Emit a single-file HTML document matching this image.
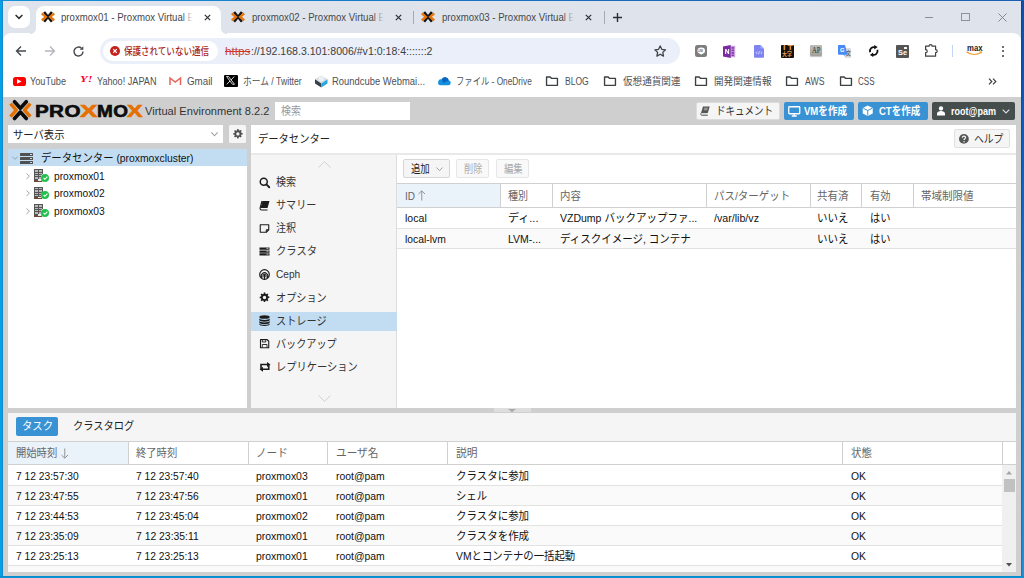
<!DOCTYPE html>
<html lang="ja">
<head>
<meta charset="utf-8">
<title>proxmox01 - Proxmox Virtual Environment</title>
<style>
*{box-sizing:border-box;margin:0;padding:0}
html,body{width:1024px;height:578px;overflow:hidden}
body{position:relative;background:#02a2e8;font-family:"Liberation Sans","Noto Sans CJK JP",sans-serif;color:#000}
body>*,#lastrow>*{position:absolute}
.t{display:block;white-space:nowrap;line-height:16px;height:16px;transform-origin:0 50%}
svg{overflow:visible}
</style>
</head>
<body>
<svg width="0" height="0" style="left:0;top:0"><defs>
<symbol id="pvx" viewBox="0 0 13 11.200"><path d="M2.900 1 10.100 10.200M10.100 1 2.900 10.200" fill="none" stroke="#161616" stroke-width="2.300"/><path d="M.7 2.300 4.500 5.600.7 8.900M12.300 2.300 8.500 5.600l3.800 3.300" fill="none" stroke="#e8750a" stroke-width="2.200"/></symbol>
<symbol id="cx" viewBox="0 0 10 10"><path d="M2 2l6 6M8 2l-6 6" stroke="#2b2d30" stroke-width="1.300" fill="none"/></symbol>
<symbol id="fold" viewBox="0 0 16 12"><path d="M1.700 1.200h4.200l1.400 1.500h7v8.100H1.700z" fill="none" stroke="#3c4043" stroke-width="1.600" stroke-linejoin="round"/></symbol>
</defs></svg>
<div style="left:2px;top:1px;width:1px;height:575px;background:#1789c9;"></div>
<div style="left:1021px;top:0px;width:3px;height:578px;background:linear-gradient(180deg,#0a4fb2,#0560c8 26%,#0a78d4 50%,#1a92de);"></div>
<div style="left:1021px;top:1px;width:1px;height:575px;background:rgba(0,40,110,.25);"></div>
<div style="left:0px;top:576px;width:1024px;height:2px;background:linear-gradient(180deg,#0b84c6,#0a9ade);"></div>
<div style="left:0px;top:0px;width:1024px;height:1px;background:linear-gradient(90deg,#1391d8,#1a6abc 60%,#1a5fb2);"></div>
<div style="left:3px;top:1px;width:1018px;height:45px;background:#dfe3eb;"></div>
<div style="left:3px;top:33px;width:1018px;height:35px;background:#fff;border-radius:8px 8px 0 0;"></div>
<div style="left:3px;top:67px;width:1018px;height:30px;background:#fff;"></div>
<div style="left:3px;top:97px;width:1018px;height:479px;background:#cfcfcf;"></div>
<div style="left:8px;top:6px;width:22px;height:22px;background:#fff;border-radius:7px;"></div>
<svg style="left:14px;top:13px;" width="10" height="8" viewBox="0 0 10 8"><path d="M1.600 2l3.400 3.400L8.400 2" fill="none" stroke="#2b2d30" stroke-width="1.500"/></svg>
<div style="left:36px;top:6px;width:185px;height:28px;background:#fff;border-radius:8px 8px 0 0;"></div>
<div style="left:30px;top:28px;width:6px;height:6px;background:radial-gradient(circle at 0 0,#dfe3eb 5.700px,#fff 6.300px);"></div>
<div style="left:221px;top:28px;width:6px;height:6px;background:radial-gradient(circle at 100% 0,#dfe3eb 5.700px,#fff 6.300px);"></div>
<svg style="left:41.3px;top:10.8px;" width="14" height="11.8" viewBox="0 0 13 11.200" preserveAspectRatio="none"><use href="#pvx"/></svg>
<span class="t" style="left:61px;top:10.30px;font-size:10px;color:#45494d;transform:scaleX(0.9624);">proxmox01 - Proxmox Virtual E</span>
<div style="left:182px;top:9px;width:12px;height:17px;background:linear-gradient(90deg,transparent,#fff 90%);"></div>
<svg style="left:203.0px;top:12.5px;" width="9" height="9" viewBox="0 0 10 10"><use href="#cx"/></svg>
<svg style="left:231.3px;top:10.8px;" width="14" height="11.8" viewBox="0 0 13 11.200" preserveAspectRatio="none"><use href="#pvx"/></svg>
<span class="t" style="left:251.5px;top:10.30px;font-size:10px;color:#45494d;transform:scaleX(0.9624);">proxmox02 - Proxmox Virtual E</span>
<div style="left:372.5px;top:9px;width:12px;height:17px;background:linear-gradient(90deg,transparent,#dfe3eb 90%);"></div>
<svg style="left:393.5px;top:12.5px;" width="9" height="9" viewBox="0 0 10 10"><use href="#cx"/></svg>
<svg style="left:421.3px;top:10.8px;" width="14" height="11.8" viewBox="0 0 13 11.200" preserveAspectRatio="none"><use href="#pvx"/></svg>
<span class="t" style="left:441.5px;top:10.30px;font-size:10px;color:#45494d;transform:scaleX(0.9624);">proxmox03 - Proxmox Virtual E</span>
<div style="left:562.5px;top:9px;width:12px;height:17px;background:linear-gradient(90deg,transparent,#dfe3eb 90%);"></div>
<svg style="left:584.0px;top:12.5px;" width="9" height="9" viewBox="0 0 10 10"><use href="#cx"/></svg>
<div style="left:413px;top:11px;width:1px;height:13px;background:#a4a9b2;"></div>
<div style="left:604px;top:11px;width:1px;height:13px;background:#a4a9b2;"></div>
<svg style="left:612px;top:11.5px;" width="11" height="11" viewBox="0 0 11 11"><path d="M5.500 1v9M1 5.500h9" stroke="#2b2d30" stroke-width="1.400"/></svg>
<div style="left:925px;top:16.8px;width:8px;height:1px;background:#8a8d93;"></div>
<div style="left:961px;top:12.5px;width:8.8px;height:8.8px;background:transparent;border:1px solid #8f9298;"></div>
<svg style="left:998px;top:12.5px;" width="9" height="9" viewBox="0 0 10 10"><path d="M.5.5l9 9M9.500.5l-9 9" stroke="#85888e" stroke-width="1.100" fill="none"/></svg>
<svg style="left:14.5px;top:45px;" width="12" height="12" viewBox="0 0 12 12"><path d="M11 6H1.800M6 1.500 1.500 6 6 10.500" fill="none" stroke="#45484c" stroke-width="1.400"/></svg>
<svg style="left:43.5px;top:45px;" width="12" height="12" viewBox="0 0 12 12"><path d="M1 6h9.200M6 1.500 10.500 6 6 10.500" fill="none" stroke="#b4b7bb" stroke-width="1.400"/></svg>
<svg style="left:72px;top:44.5px;" width="13" height="13" viewBox="0 0 13 13"><path d="M11 6.500a4.500 4.500 0 1 1-1.500-3.350" fill="none" stroke="#45484c" stroke-width="1.400"/><path d="M11.300 1.200v3.600H7.700z" fill="#45484c"/></svg>
<div style="left:100px;top:37.6px;width:580px;height:26.9px;background:#ebeff9;border-radius:13.400px;"></div>
<div style="left:103px;top:41.2px;width:114.8px;height:19.8px;background:#fff;border-radius:9.900px;"></div>
<svg style="left:109.5px;top:46px;" width="10" height="10" viewBox="0 0 10 10"><circle cx="5" cy="5" r="5" fill="#c5221f"/><path d="M3.200 3.200l3.600 3.600M6.800 3.200 3.200 6.800" stroke="#fff" stroke-width="1.200"/></svg>
<span class="t" style="left:124px;top:43.00px;font-size:10.5px;color:#a82a23;font-weight:500;transform:scaleX(0.8119);">保護されていない通信</span>
<span class="t" style="left:225px;top:43.00px;font-size:11.2px;color:#c0453d;transform:scaleX(1.0426);text-decoration:line-through;text-decoration-color:#d93025;">https</span>
<span class="t" style="left:250.5px;top:43.00px;font-size:11.2px;color:#3c4043;transform:scaleX(0.9442);">://192.168.3.101:8006/#v1:0:18:4:::::::2</span>
<svg style="left:653.4px;top:43.9px;" width="14.4" height="14.4" viewBox="0 0 24 24"><path d="M12 3.200l2.700 5.700 6.200.8-4.600 4.300 1.200 6.200L12 17.100l-5.500 3.100 1.200-6.200L3.100 9.700l6.200-.8z" fill="none" stroke="#3c4043" stroke-width="2.100" stroke-linejoin="round"/></svg>
<div style="left:694.5px;top:44.75px;width:12.5px;height:12.5px;background:#7d7d7d;border-radius:2.500px;"></div>
<svg style="left:696.5px;top:46.5px;" width="8.5" height="8.5" viewBox="0 0 17 17"><ellipse cx="8.500" cy="7.500" rx="7.600" ry="6.300" fill="#fff"/><path d="M6 12.500 8.300 16l2.300-3.200z" fill="#fff"/></svg>
<span class="t" style="left:698.3px;top:42.70px;font-size:3.5px;color:#666;font-weight:700;transform:scaleX(0.6137);">LINE</span>
<svg style="left:723px;top:44.5px;" width="13" height="13" viewBox="0 0 26 26"><path d="M15 1.500h8.500a1 1 0 0 1 1 1v21a1 1 0 0 1-1 1H15z" fill="#c9a3dc"/><path d="M17 4h5v3.500h-5zM17 9h5v3.500h-5zM17 14h5v3.500h-5zM17 19h5v3h-5z" fill="#8a3fb0"/><path d="M0 3.200 15.500 0v26L0 22.800z" fill="#7a2aa3"/><path d="M4.300 18V8h2.300l3.600 6.200V8h2.100v10h-2.200L6.400 11.600V18z" fill="#fff"/></svg>
<svg style="left:753.5px;top:44.75px;" width="10" height="12.75" viewBox="0 0 20 25.500"><path d="M2 0h11l7 7v16.500a2 2 0 0 1-2 2H2a2 2 0 0 1-2-2V2a2 2 0 0 1 2-2z" fill="#7d84f2"/><path d="M13 0l7 7h-5a2 2 0 0 1-2-2z" fill="#a9aef8"/><path d="M6.500 13 4 15.500 6.500 18M13.500 13l2.500 2.500-2.500 2.500M11 12.500l-2 6" fill="none" stroke="#fff" stroke-width="1.300"/></svg>
<div style="left:780.75px;top:44.75px;width:13px;height:12.75px;background:#111;border-radius:1px;"></div>
<span class="t" style="left:783.3px;top:40.30px;font-size:6.5px;color:#e8a14a;font-weight:700;transform:scaleX(1.3665);letter-spacing:1.500px;">IT</span>
<span class="t" style="left:782.3px;top:46.20px;font-size:5.5px;color:#e8a14a;font-weight:700;transform:scaleX(0.8987);">大学</span>
<div style="left:809.75px;top:44.75px;width:12.25px;height:11.5px;background:linear-gradient(180deg,#bdbdb5,#a2a29a);border-radius:1px;box-shadow:0 1px 1px rgba(0,0,0,.25);"></div>
<span class="t" style="left:811.6px;top:42.80px;font-size:8px;color:#2a2a2a;transform:scaleX(0.8246);font-family:'Liberation Serif',serif;">AP</span>
<div style="left:844.5px;top:47.5px;width:6.5px;height:10px;background:#d9dbdd;border-radius:1px;"></div>
<span class="t" style="left:845.8px;top:44.70px;font-size:5.5px;color:#5f6a72;font-weight:700;transform:scaleX(0.8703);">文</span>
<svg style="left:838px;top:44.75px;" width="9.5" height="12.5" viewBox="0 0 19 25"><path d="M1.500 0H14l5 19.500H12.500L16 25l-5.500-5.500H1.500A1.500 1.500 0 0 1 0 18V1.500A1.500 1.500 0 0 1 1.500 0z" fill="#4a8af4"/></svg>
<span class="t" style="left:840.3px;top:42.40px;font-size:6px;color:#fff;font-weight:700;transform:scaleX(0.9632);">G</span>
<svg style="left:868px;top:45px;" width="11.5" height="12" viewBox="0 0 23 24"><path d="M4.200 14.500A8 8 0 0 1 14.500 4.600" fill="none" stroke="#111" stroke-width="3.600"/><path d="M18.800 9.500A8 8 0 0 1 8.500 19.400" fill="none" stroke="#111" stroke-width="3.600"/><path d="M12.300 0l7 4.200-6.600 4.600z" fill="#111"/><path d="M10.700 24l-7-4.200 6.600-4.600z" fill="#111"/></svg>
<div style="left:896px;top:44.75px;width:12.75px;height:12.75px;background:#555;border-radius:1px;"></div>
<div style="left:903.5px;top:46.8px;width:3.8px;height:1.9px;background:#fff;border-radius:.5px;"></div>
<span class="t" style="left:897.6px;top:45.20px;font-size:7.2px;color:#fff;font-weight:700;transform:scaleX(1.0231);">Se</span>
<svg style="left:925.4px;top:44px;" width="13.2" height="12.8" viewBox="0 0 26.400 25.600"><path d="M1.200 4.400H8.200C8.200 .2 14.200 .2 14.200 4.400H21.200V11.400C25.600 11.400 25.600 17.400 21.200 17.400V24.400H1.200V17.400C5.600 17.400 5.600 11.400 1.200 11.400Z" fill="none" stroke="#3c4043" stroke-width="2.400" stroke-linejoin="round"/></svg>
<div style="left:952.3px;top:44.75px;width:1px;height:12.5px;background:#c4d4f5;"></div>
<span class="t" style="left:966.8px;top:40.20px;font-size:8.3px;color:#222;font-weight:700;transform:scaleX(0.9332);">max</span>
<svg style="left:966.4px;top:50.6px;" width="16.4" height="5" viewBox="0 0 32.800 10"><path d="M1 1.500C9 8.500 22 8.500 30.500 2.500" fill="none" stroke="#f29a2e" stroke-width="2.200"/><path d="M26.500.5l5.500.5-1.200 5z" fill="#f29a2e"/></svg>
<div style="left:1001.8px;top:45.5px;width:2.2px;height:2.2px;background:#3c4043;border-radius:50%;"></div>
<div style="left:1001.8px;top:50.0px;width:2.2px;height:2.2px;background:#3c4043;border-radius:50%;"></div>
<div style="left:1001.8px;top:54.5px;width:2.2px;height:2.2px;background:#3c4043;border-radius:50%;"></div>
<div style="left:13px;top:76.5px;width:12.5px;height:9px;background:#f00;border-radius:2.600px;"></div>
<svg style="left:17.4px;top:78.6px;" width="4.6" height="4.8" viewBox="0 0 4.600 4.800"><path d="M0 0l4.600 2.400L0 4.800z" fill="#fff"/></svg>
<span class="t" style="left:30px;top:74.00px;font-size:10px;color:#4d5156;transform:scaleX(0.9161);">YouTube</span>
<span class="t" style="left:79.5px;top:72.40px;font-size:8.4px;color:#ff0033;font-weight:700;transform:scaleX(1.4925);font-family:'Liberation Serif',serif;font-style:italic;">Y!</span>
<span class="t" style="left:97px;top:74.00px;font-size:10px;color:#4d5156;transform:scaleX(0.9121);">Yahoo! JAPAN</span>
<svg style="left:169px;top:75.7px;" width="12.5" height="9.5" viewBox="0 0 25 19"><path d="M2 18V4l10.500 8L23 4v14" fill="none" stroke="#e5665b" stroke-width="3" stroke-linejoin="miter"/></svg>
<span class="t" style="left:187px;top:74.00px;font-size:10px;color:#4d5156;transform:scaleX(0.9761);">Gmail</span>
<div style="left:224.25px;top:74.5px;width:13.25px;height:12.5px;background:#000;border-radius:1px;"></div>
<svg style="left:226.4px;top:76.4px;" width="9" height="8.8" viewBox="0 0 18 17.600"><path d="M1 1h4l12 15.600h-4z" fill="none" stroke="#fff" stroke-width="1.600"/><path d="M16.500 1 10 8.200M8 10 1.500 16.600" stroke="#fff" stroke-width="1.600"/></svg>
<span class="t" style="left:242.5px;top:74.00px;font-size:10px;color:#4d5156;transform:scaleX(0.8706);">ホーム / Twitter</span>
<svg style="left:313.5px;top:74.5px;" width="14.5" height="13" viewBox="0 0 29 26"><path d="M14.500 1 27 8.500 14.500 17 2 8.500z" fill="#d9dee3"/><path d="M2 8.500 14.500 17v8L2 17z" fill="#37414b"/><path d="M27 8.500 14.500 17v8L27 17z" fill="#2aa7e0"/><circle cx="14.500" cy="7.500" r="5.200" fill="#eef1f4"/></svg>
<span class="t" style="left:332px;top:74.00px;font-size:10px;color:#4d5156;transform:scaleX(0.9416);">Roundcube Webmai...</span>
<svg style="left:437px;top:76px;" width="14" height="9.5" viewBox="0 0 28 19"><path d="M7 18.500h15.500a5 5 0 0 0 1-9.900 7.500 7.500 0 0 0-14-2A6 6 0 0 0 7 18.500z" fill="#1490df"/><path d="M9.500 6.600a7.500 7.500 0 0 1 14 2L13 14z" fill="#0a64c0"/></svg>
<span class="t" style="left:455.5px;top:74.00px;font-size:10px;color:#4d5156;transform:scaleX(0.8313);">ファイル - OneDrive</span>
<svg style="left:545px;top:75.8px;" width="14" height="10.4" viewBox="0 0 16 12"><use href="#fold"/></svg>
<span class="t" style="left:565px;top:74.00px;font-size:10px;color:#4d5156;transform:scaleX(0.8544);">BLOG</span>
<svg style="left:603px;top:75.8px;" width="14" height="10.4" viewBox="0 0 16 12"><use href="#fold"/></svg>
<span class="t" style="left:622.5px;top:74.00px;font-size:10px;color:#4d5156;transform:scaleX(0.9583);">仮想通貨関連</span>
<svg style="left:693.5px;top:75.8px;" width="14" height="10.4" viewBox="0 0 16 12"><use href="#fold"/></svg>
<span class="t" style="left:713.75px;top:74.00px;font-size:10px;color:#4d5156;transform:scaleX(0.9583);">開発関連情報</span>
<svg style="left:785px;top:75.8px;" width="14" height="10.4" viewBox="0 0 16 12"><use href="#fold"/></svg>
<span class="t" style="left:805px;top:74.00px;font-size:10px;color:#4d5156;transform:scaleX(0.8697);">AWS</span>
<svg style="left:838.5px;top:75.8px;" width="14" height="10.4" viewBox="0 0 16 12"><use href="#fold"/></svg>
<span class="t" style="left:858px;top:74.00px;font-size:10px;color:#4d5156;transform:scaleX(0.8024);">CSS</span>
<svg style="left:987.5px;top:78px;" width="9" height="7" viewBox="0 0 9 7"><path d="M1 .7 3.800 3.500 1 6.300M5 .7 7.800 3.500 5 6.300" fill="none" stroke="#3c4043" stroke-width="1.200"/></svg>
<svg style="left:8.6px;top:100.25px;" width="22.8" height="20.25" viewBox="0 0 45.600 40.500"><path d="M11 3.500 22.800 16.500 34.600 3.500M11 37 22.800 24 34.600 37" fill="none" stroke="#0c0c0c" stroke-width="7.400" stroke-linecap="round" stroke-linejoin="round"/><path d="M3 7.300 14.600 20.250 3 33.200M42.600 7.300 31 20.250 42.600 33.200" fill="none" stroke="#e57000" stroke-width="7" stroke-linejoin="round"/></svg>
<span class="t" style="left:35.2px;top:104.20px;font-size:16.8px;color:#0c0c0c;font-weight:700;transform:scaleX(1.2289);letter-spacing:.3px;-webkit-text-stroke:.6px #0c0c0c;">PRO</span>
<span class="t" style="left:79.7px;top:104.20px;font-size:16.8px;color:#e57000;font-weight:700;transform:scaleX(1.5531);-webkit-text-stroke:.6px #e57000;">X</span>
<span class="t" style="left:96.9px;top:104.20px;font-size:16.8px;color:#0c0c0c;font-weight:700;transform:scaleX(1.1314);letter-spacing:.3px;-webkit-text-stroke:.6px #0c0c0c;">MO</span>
<span class="t" style="left:127.1px;top:104.20px;font-size:16.8px;color:#e57000;font-weight:700;transform:scaleX(1.3925);-webkit-text-stroke:.6px #e57000;">X</span>
<span class="t" style="left:145.3px;top:103.20px;font-size:11.6px;color:#333;transform:scaleX(0.9575);">Virtual Environment 8.2.2</span>
<div style="left:275px;top:102px;width:135px;height:17.5px;background:#fff;"></div>
<span class="t" style="left:280.5px;top:102.80px;font-size:11.5px;color:#9a9a9a;transform:scaleX(0.8696);">検索</span>
<div style="left:695.5px;top:101.75px;width:84px;height:18.5px;background:#f5f5f5;border:1px solid #dcdcdc;border-radius:2px;"></div>
<svg style="left:699.8px;top:106px;" width="10.4" height="10" viewBox="0 0 20.800 20"><path d="M6 1h13.500L15.500 14H2z" fill="#555"/><path d="M8.500 4.500h7M7.600 7.500h7" stroke="#f5f5f5" stroke-width="1.100"/><path d="M2.800 13.500C1 14.500 1 18 3.500 18.500h12" fill="none" stroke="#555" stroke-width="2"/><path d="M3 16h12.500" stroke="#999" stroke-width="1"/></svg>
<span class="t" style="left:716px;top:102.80px;font-size:11.5px;color:#333;transform:scaleX(0.8261);">ドキュメント</span>
<div style="left:783.75px;top:101.75px;width:70.5px;height:18.5px;background:#3892d4;border-radius:2px;"></div>
<svg style="left:787.5px;top:105.8px;" width="12.5" height="10.5" viewBox="0 0 25 21"><rect x="1.500" y="1.500" width="22" height="14" rx="1.500" fill="none" stroke="#fff" stroke-width="2.600"/><path d="M7.500 20h10M12.500 16v4" stroke="#fff" stroke-width="2.600"/></svg>
<span class="t" style="left:804px;top:102.80px;font-size:11.5px;color:#fff;font-weight:700;transform:scaleX(0.8309);">VMを作成</span>
<div style="left:858.25px;top:101.75px;width:69.25px;height:18.5px;background:#3892d4;border-radius:2px;"></div>
<svg style="left:861.75px;top:105.3px;" width="11.5" height="11.5" viewBox="0 0 23 23"><path d="M11.500 1 21.500 6v11L11.500 22 1.500 17V6z" fill="#fff"/><path d="M2.500 6.500 11.500 11l9-4.500M11.500 11v10" fill="none" stroke="#3892d4" stroke-width="2"/></svg>
<span class="t" style="left:878.75px;top:102.80px;font-size:11.5px;color:#fff;font-weight:700;transform:scaleX(0.8276);">CTを作成</span>
<div style="left:932px;top:101.75px;width:83.2px;height:18.5px;background:#464d4d;border-radius:2px;"></div>
<svg style="left:937px;top:106px;" width="8" height="9.5" viewBox="0 0 16 19"><circle cx="8" cy="5" r="4.300" fill="#fff"/><path d="M0 19v-3.500C0 11.500 3.500 10 8 10s8 1.500 8 5.500V19z" fill="#fff"/></svg>
<span class="t" style="left:951px;top:102.80px;font-size:11.5px;color:#fff;font-weight:700;transform:scaleX(0.7865);">root@pam</span>
<svg style="left:1001.5px;top:109px;" width="8" height="5" viewBox="0 0 8 5"><path d="M.7.700 4 4 7.300.7" fill="none" stroke="#dfe3e3" stroke-width="1.100"/></svg>
<div style="left:8px;top:125.3px;width:215.2px;height:17.7px;background:#fff;"></div>
<span class="t" style="left:13px;top:126.60px;font-size:11.5px;color:#222;transform:scaleX(0.8974);">サーバ表示</span>
<svg style="left:211px;top:131.8px;" width="7" height="4.4" viewBox="0 0 7 4.400"><path d="M.4.400 3.500 3.800 6.600.4" fill="none" stroke="#9f9f9f" stroke-width="1.100"/></svg>
<div style="left:228.7px;top:125.3px;width:17.55px;height:17.7px;background:#f5f5f5;border-radius:1.500px;"></div>
<svg style="left:232.7px;top:129.3px;" width="9.8" height="9.8" viewBox="0 0 20 20"><path d="M8.600 0h2.800l.5 2.600 1.700.7 2.200-1.500 2 2-1.500 2.200.7 1.700 2.600.5v2.800l-2.600.5-.7 1.700 1.500 2.200-2 2-2.200-1.500-1.700.7-.5 2.600H8.600l-.5-2.600-1.700-.7-2.200 1.500-2-2 1.500-2.200-.7-1.700L.4 11.400V8.600L3 8.100l.7-1.700-1.500-2.200 2-2 2.200 1.500 1.700-.7z" fill="#505050"/><circle cx="10" cy="10" r="3.300" fill="#f5f5f5"/></svg>
<div style="left:8px;top:149px;width:238.5px;height:259px;background:#fff;"></div>
<div style="left:8px;top:149px;width:238.5px;height:17px;background:#c2ddf2;"></div>
<svg style="left:12px;top:156px;" width="6" height="4" viewBox="0 0 6 4"><path d="M.4.500 3 3.400 5.600.5" fill="none" stroke="#93a3b0" stroke-width=".9"/></svg>
<div style="left:20.2px;top:152.5px;width:13.3px;height:3.3px;background:#505050;border-radius:.5px;"></div>
<div style="left:29.5px;top:153.6px;width:2.6px;height:1.1px;background:#c2ddf2;"></div>
<div style="left:20.2px;top:156.7px;width:13.3px;height:3.3px;background:#505050;border-radius:.5px;"></div>
<div style="left:29.5px;top:157.79999999999998px;width:2.6px;height:1.1px;background:#c2ddf2;"></div>
<div style="left:20.2px;top:160.9px;width:13.3px;height:3.3px;background:#505050;border-radius:.5px;"></div>
<div style="left:29.5px;top:162.0px;width:2.6px;height:1.1px;background:#c2ddf2;"></div>
<span class="t" style="left:41.25px;top:149.80px;font-size:11.5px;color:#111;transform:scaleX(0.9006);">データセンター (proxmoxcluster)</span>
<svg style="left:26.3px;top:172.75px;" width="4" height="6.4" viewBox="0 0 4 6.400"><path d="M.5.500 3.400 3.200 .5 5.900" fill="none" stroke="#9c9c9c" stroke-width=".9"/></svg>
<div style="left:34px;top:169.25px;width:9.4px;height:12.7px;background:#555;"></div>
<div style="left:35.2px;top:170.45px;width:2.4px;height:1.3px;background:#b9b9b9;"></div>
<div style="left:38.6px;top:170.45px;width:3.5px;height:1.3px;background:#b9b9b9;"></div>
<div style="left:35.2px;top:172.75px;width:2.4px;height:1.3px;background:#b9b9b9;"></div>
<div style="left:38.6px;top:172.75px;width:3.5px;height:1.3px;background:#b9b9b9;"></div>
<div style="left:35.2px;top:175.04999999999998px;width:2.4px;height:1.3px;background:#b9b9b9;"></div>
<div style="left:38.6px;top:175.04999999999998px;width:3.5px;height:1.3px;background:#b9b9b9;"></div>
<div style="left:35.2px;top:177.35px;width:2.4px;height:1.3px;background:#b9b9b9;"></div>
<div style="left:38.6px;top:177.35px;width:3.5px;height:1.3px;background:#b9b9b9;"></div>
<div style="left:34px;top:179.95px;width:9.4px;height:2px;background:#6b4a3a;"></div>
<div style="left:38.3px;top:179.35px;width:2.6px;height:1.6px;background:#eee;"></div>
<div style="left:40.6px;top:173.15px;width:9.4px;height:9.4px;background:#fff;border-radius:50%;"></div>
<div style="left:41.2px;top:173.75px;width:8.2px;height:8.2px;background:#21bf4b;border-radius:50%;"></div>
<svg style="left:42.9px;top:175.95px;" width="5" height="4" viewBox="0 0 5 4"><path d="M.6 2 1.900 3.300 4.400.6" fill="none" stroke="#fff" stroke-width="1.100"/></svg>
<span class="t" style="left:53.75px;top:167.75px;font-size:11.5px;color:#111;transform:scaleX(0.8921);">proxmox01</span>
<svg style="left:26.3px;top:190.25px;" width="4" height="6.4" viewBox="0 0 4 6.400"><path d="M.5.500 3.400 3.200 .5 5.900" fill="none" stroke="#9c9c9c" stroke-width=".9"/></svg>
<div style="left:34px;top:186.75px;width:9.4px;height:12.7px;background:#555;"></div>
<div style="left:35.2px;top:187.95px;width:2.4px;height:1.3px;background:#b9b9b9;"></div>
<div style="left:38.6px;top:187.95px;width:3.5px;height:1.3px;background:#b9b9b9;"></div>
<div style="left:35.2px;top:190.25px;width:2.4px;height:1.3px;background:#b9b9b9;"></div>
<div style="left:38.6px;top:190.25px;width:3.5px;height:1.3px;background:#b9b9b9;"></div>
<div style="left:35.2px;top:192.54999999999998px;width:2.4px;height:1.3px;background:#b9b9b9;"></div>
<div style="left:38.6px;top:192.54999999999998px;width:3.5px;height:1.3px;background:#b9b9b9;"></div>
<div style="left:35.2px;top:194.85px;width:2.4px;height:1.3px;background:#b9b9b9;"></div>
<div style="left:38.6px;top:194.85px;width:3.5px;height:1.3px;background:#b9b9b9;"></div>
<div style="left:34px;top:197.45px;width:9.4px;height:2px;background:#6b4a3a;"></div>
<div style="left:38.3px;top:196.85px;width:2.6px;height:1.6px;background:#eee;"></div>
<div style="left:40.6px;top:190.65px;width:9.4px;height:9.4px;background:#fff;border-radius:50%;"></div>
<div style="left:41.2px;top:191.25px;width:8.2px;height:8.2px;background:#21bf4b;border-radius:50%;"></div>
<svg style="left:42.9px;top:193.45px;" width="5" height="4" viewBox="0 0 5 4"><path d="M.6 2 1.900 3.300 4.400.6" fill="none" stroke="#fff" stroke-width="1.100"/></svg>
<span class="t" style="left:53.75px;top:185.25px;font-size:11.5px;color:#111;transform:scaleX(0.8921);">proxmox02</span>
<svg style="left:26.3px;top:207.75px;" width="4" height="6.4" viewBox="0 0 4 6.400"><path d="M.5.500 3.400 3.200 .5 5.900" fill="none" stroke="#9c9c9c" stroke-width=".9"/></svg>
<div style="left:34px;top:204.25px;width:9.4px;height:12.7px;background:#555;"></div>
<div style="left:35.2px;top:205.45px;width:2.4px;height:1.3px;background:#b9b9b9;"></div>
<div style="left:38.6px;top:205.45px;width:3.5px;height:1.3px;background:#b9b9b9;"></div>
<div style="left:35.2px;top:207.75px;width:2.4px;height:1.3px;background:#b9b9b9;"></div>
<div style="left:38.6px;top:207.75px;width:3.5px;height:1.3px;background:#b9b9b9;"></div>
<div style="left:35.2px;top:210.04999999999998px;width:2.4px;height:1.3px;background:#b9b9b9;"></div>
<div style="left:38.6px;top:210.04999999999998px;width:3.5px;height:1.3px;background:#b9b9b9;"></div>
<div style="left:35.2px;top:212.35px;width:2.4px;height:1.3px;background:#b9b9b9;"></div>
<div style="left:38.6px;top:212.35px;width:3.5px;height:1.3px;background:#b9b9b9;"></div>
<div style="left:34px;top:214.95px;width:9.4px;height:2px;background:#6b4a3a;"></div>
<div style="left:38.3px;top:214.35px;width:2.6px;height:1.6px;background:#eee;"></div>
<div style="left:40.6px;top:208.15px;width:9.4px;height:9.4px;background:#fff;border-radius:50%;"></div>
<div style="left:41.2px;top:208.75px;width:8.2px;height:8.2px;background:#21bf4b;border-radius:50%;"></div>
<svg style="left:42.9px;top:210.95px;" width="5" height="4" viewBox="0 0 5 4"><path d="M.6 2 1.900 3.300 4.400.6" fill="none" stroke="#fff" stroke-width="1.100"/></svg>
<span class="t" style="left:53.75px;top:202.75px;font-size:11.5px;color:#111;transform:scaleX(0.8921);">proxmox03</span>
<div style="left:251px;top:125px;width:765.3px;height:283px;background:#fff;"></div>
<span class="t" style="left:258px;top:130.80px;font-size:11.5px;color:#222;transform:scaleX(0.8944);">データセンター</span>
<div style="left:954.4px;top:129.2px;width:55.6px;height:19.2px;background:#f5f5f5;border:1px solid #e0e0e0;border-radius:2px;"></div>
<svg style="left:959px;top:133.9px;" width="9.8" height="9.8" viewBox="0 0 16 16"><circle cx="8" cy="8" r="8" fill="#555"/><path d="M5.500 6.200c0-3.400 5.200-3.300 5.200-.3 0 1.900-2.500 2-2.500 4" fill="none" stroke="#f5f5f5" stroke-width="2"/><circle cx="8.200" cy="12.600" r="1.200" fill="#f5f5f5"/></svg>
<span class="t" style="left:973.6px;top:130.80px;font-size:11.5px;color:#333;transform:scaleX(0.8522);">ヘルプ</span>
<div style="left:251px;top:153px;width:765.3px;height:2px;background:#e9e9e9;"></div>
<div style="left:251px;top:155px;width:145.5px;height:253px;background:#f5f5f5;"></div>
<div style="left:396px;top:155px;width:1px;height:253px;background:#dcdcdc;"></div>
<svg style="left:317.5px;top:160.5px;" width="13" height="7" viewBox="0 0 13 7"><path d="M.5 6.500 6.500.7l6 5.800" fill="none" stroke="#d0d0d0" stroke-width="1"/></svg>
<svg style="left:317.5px;top:395px;" width="13" height="7" viewBox="0 0 13 7"><path d="M.5.500 6.500 6.300l6-5.800" fill="none" stroke="#d0d0d0" stroke-width="1"/></svg>
<div style="left:251px;top:311.7px;width:145.5px;height:19.2px;background:#c2ddf2;"></div>
<svg style="left:258.5px;top:176.7px;" width="11" height="11" viewBox="0 0 22 22"><circle cx="9.500" cy="9.500" r="7" fill="none" stroke="#1c1c1c" stroke-width="3"/><path d="M14.800 14.800 20.500 20.500" stroke="#1c1c1c" stroke-width="3.600" stroke-linecap="round"/></svg>
<span class="t" style="left:276.3px;top:174.20px;font-size:11.5px;color:#333;transform:scaleX(0.8739);">検索</span>
<svg style="left:258.5px;top:199.76999999999998px;" width="11" height="11" viewBox="0 0 22 22"><path d="M7 2h14l-4 14H3z" fill="#1c1c1c"/><path d="M6 2 2 16.500c0 3 1.500 3.500 3 3.500h12" fill="none" stroke="#1c1c1c" stroke-width="2.200"/></svg>
<span class="t" style="left:276.3px;top:197.27px;font-size:11.5px;color:#333;transform:scaleX(0.8783);">サマリー</span>
<svg style="left:258.5px;top:222.83999999999997px;" width="11" height="11" viewBox="0 0 22 22"><path d="M2.500 3.500h17v10l-5 5h-12z" fill="none" stroke="#1c1c1c" stroke-width="2.200" stroke-linejoin="round"/><path d="M19.500 13.500h-5v5" fill="none" stroke="#1c1c1c" stroke-width="2"/></svg>
<span class="t" style="left:276.3px;top:220.34px;font-size:11.5px;color:#333;transform:scaleX(0.8739);">注釈</span>
<svg style="left:258.5px;top:245.91px;" width="11" height="11" viewBox="0 0 22 22"><path d="M1 3h20v4.600H1zM1 8.800h20v4.600H1zM1 14.600h20v4.600H1z" fill="#1c1c1c"/><path d="M15 4.600h4M15 10.400h4M15 16.200h4" stroke="#f5f5f5" stroke-width="1.600"/></svg>
<span class="t" style="left:276.3px;top:243.41px;font-size:11.5px;color:#333;transform:scaleX(0.8977);">クラスタ</span>
<svg style="left:258.5px;top:268.98px;" width="11" height="11" viewBox="0 0 22 22"><circle cx="11" cy="11" r="9.600" fill="none" stroke="#1c1c1c" stroke-width="2.400"/><path d="M6.200 18.200a6.400 6.400 0 1 1 9.600 0M9 16.200a3.200 3.200 0 1 1 4 0" fill="none" stroke="#1c1c1c" stroke-width="2.200"/><path d="M11 11.500v10" stroke="#1c1c1c" stroke-width="2.200"/></svg>
<span class="t" style="left:276.3px;top:266.48px;font-size:11.5px;color:#333;transform:scaleX(0.8800);">Ceph</span>
<svg style="left:258.5px;top:292.04999999999995px;" width="11" height="11" viewBox="0 0 22 22"><g transform="translate(1 1)"><path d="M8.600 0h2.800l.5 2.600 1.700.7 2.200-1.500 2 2-1.500 2.200.7 1.700 2.600.5v2.800l-2.600.5-.7 1.700 1.500 2.200-2 2-2.200-1.500-1.700.7-.5 2.600H8.600l-.5-2.600-1.700-.7-2.200 1.500-2-2 1.500-2.200-.7-1.700L.4 11.400V8.600L3 8.100l.7-1.700-1.500-2.200 2-2 2.200 1.500 1.700-.7z" fill="#1c1c1c"/><circle cx="10" cy="10" r="3.300" fill="#f5f5f5"/></g></svg>
<span class="t" style="left:276.3px;top:289.55px;font-size:11.5px;color:#333;transform:scaleX(0.8817);">オプション</span>
<svg style="left:258.5px;top:315.12px;" width="11" height="11" viewBox="0 0 22 22"><ellipse cx="11" cy="4" rx="10.400" ry="3.700" fill="#1c1c1c"/><path d="M.6 6.400c0 4.600 20.800 4.600 20.800 0v3.600c0 4.600-20.800 4.600-20.800 0zM.6 11.400c0 4.600 20.800 4.600 20.800 0v3.600c0 4.600-20.800 4.600-20.800 0zM.6 16.400c0 4.600 20.800 4.600 20.800 0v2.200c0 4.600-20.800 4.600-20.800 0z" fill="#1c1c1c"/></svg>
<span class="t" style="left:276.3px;top:312.62px;font-size:11.5px;color:#333;transform:scaleX(0.8851);">ストレージ</span>
<svg style="left:258.5px;top:338.19px;" width="11" height="11" viewBox="0 0 22 22"><path d="M3 3h13l3.500 3.500V19.500H3z" fill="none" stroke="#1c1c1c" stroke-width="2.200" stroke-linejoin="round"/><path d="M6.500 3.500h7v4.500h-7zM6.500 19v-6h9.500v6" fill="none" stroke="#1c1c1c" stroke-width="1.800"/></svg>
<span class="t" style="left:276.3px;top:335.69px;font-size:11.5px;color:#333;transform:scaleX(0.8797);">バックアップ</span>
<svg style="left:258.5px;top:361.26px;" width="11" height="11" viewBox="0 0 22 22"><path d="M4 15.500V7h13M19.500 8v8.500h-13" fill="none" stroke="#1c1c1c" stroke-width="3.200"/><path d="M16 2 23 7l-7 5zM8 11.500 1 16.500l7 5z" fill="#1c1c1c"/></svg>
<span class="t" style="left:276.3px;top:358.76px;font-size:11.5px;color:#333;transform:scaleX(0.8902);">レプリケーション</span>
<div style="left:403px;top:159px;width:46.75px;height:18.5px;background:#f5f5f5;border:1px solid #d6d6d6;border-radius:2px;"></div>
<span class="t" style="left:410.5px;top:160.60px;font-size:11.5px;color:#222;transform:scaleX(0.8152);">追加</span>
<svg style="left:435.5px;top:166.5px;" width="7" height="4.5" viewBox="0 0 7 4.500"><path d="M.5.500 3.500 3.700 6.500.5" fill="none" stroke="#9a9a9a" stroke-width=".9"/></svg>
<div style="left:456px;top:159px;width:33px;height:18.5px;background:#f9f9f9;border:1px solid #e6e6e6;border-radius:2px;"></div>
<span class="t" style="left:464px;top:160.60px;font-size:11.5px;color:#a9a9a9;transform:scaleX(0.7935);">削除</span>
<div style="left:496px;top:159px;width:33px;height:18.5px;background:#f9f9f9;border:1px solid #e6e6e6;border-radius:2px;"></div>
<span class="t" style="left:503.5px;top:160.60px;font-size:11.5px;color:#a9a9a9;transform:scaleX(0.8152);">編集</span>
<div style="left:397px;top:183px;width:619.3px;height:1px;background:#d0d0d0;"></div>
<div style="left:397px;top:184px;width:103px;height:23.5px;background:#eaf2fa;"></div>
<div style="left:397px;top:207px;width:619.3px;height:1px;background:#d0d0d0;"></div>
<div style="left:500px;top:184px;width:1px;height:23.5px;background:#d0d0d0;"></div>
<div style="left:551.5px;top:184px;width:1px;height:23.5px;background:#d0d0d0;"></div>
<div style="left:706.4px;top:184px;width:1px;height:23.5px;background:#d0d0d0;"></div>
<div style="left:809.5px;top:184px;width:1px;height:23.5px;background:#d0d0d0;"></div>
<div style="left:861.2px;top:184px;width:1px;height:23.5px;background:#d0d0d0;"></div>
<div style="left:913px;top:184px;width:1px;height:23.5px;background:#d0d0d0;"></div>
<span class="t" style="left:404.75px;top:187.60px;font-size:11.5px;color:#666;transform:scaleX(0.8696);">ID</span>
<svg style="left:418px;top:190px;" width="7.5" height="11" viewBox="0 0 7.500 11"><path d="M3.750 10.500V1M.5 4 3.750.8 7 4" fill="none" stroke="#8a8a8a" stroke-width=".9"/></svg>
<span class="t" style="left:508px;top:187.60px;font-size:11.5px;color:#666;transform:scaleX(0.8696);">種別</span>
<span class="t" style="left:559.75px;top:187.60px;font-size:11.5px;color:#666;transform:scaleX(0.9022);">内容</span>
<span class="t" style="left:713.9px;top:187.60px;font-size:11.5px;color:#666;transform:scaleX(0.9092);">パス/ターゲット</span>
<span class="t" style="left:817.4px;top:187.60px;font-size:11.5px;color:#666;transform:scaleX(0.9101);">共有済</span>
<span class="t" style="left:869.5px;top:187.60px;font-size:11.5px;color:#666;transform:scaleX(0.8913);">有効</span>
<span class="t" style="left:921.2px;top:187.60px;font-size:11.5px;color:#666;transform:scaleX(0.9130);">帯域制限値</span>
<div style="left:397px;top:228px;width:619.3px;height:20px;background:#fafafa;"></div>
<div style="left:397px;top:228px;width:619.3px;height:1px;background:#e2e2e2;"></div>
<div style="left:397px;top:248px;width:619.3px;height:1px;background:#e2e2e2;"></div>
<span class="t" style="left:404.75px;top:210.00px;font-size:11.5px;color:#111;transform:scaleX(0.9194);">local</span>
<span class="t" style="left:508px;top:210.00px;font-size:11.5px;color:#111;transform:scaleX(0.9597);">ディ...</span>
<span class="t" style="left:559.75px;top:210.00px;font-size:11.5px;color:#111;transform:scaleX(0.9140);">VZDump バックアップファ...</span>
<span class="t" style="left:713.9px;top:210.00px;font-size:11.5px;color:#111;transform:scaleX(0.9263);">/var/lib/vz</span>
<span class="t" style="left:817.4px;top:210.00px;font-size:11.5px;color:#111;transform:scaleX(0.9101);">いいえ</span>
<span class="t" style="left:869.5px;top:210.00px;font-size:11.5px;color:#111;transform:scaleX(0.8913);">はい</span>
<span class="t" style="left:404.75px;top:230.70px;font-size:11.5px;color:#111;transform:scaleX(0.8981);">local-lvm</span>
<span class="t" style="left:508px;top:230.70px;font-size:11.5px;color:#111;transform:scaleX(0.9111);">LVM-...</span>
<span class="t" style="left:559.75px;top:230.70px;font-size:11.5px;color:#111;transform:scaleX(0.9127);">ディスクイメージ, コンテナ</span>
<span class="t" style="left:817.4px;top:230.70px;font-size:11.5px;color:#111;transform:scaleX(0.9101);">いいえ</span>
<span class="t" style="left:869.5px;top:230.70px;font-size:11.5px;color:#111;transform:scaleX(0.8913);">はい</span>
<div style="left:493.5px;top:408.3px;width:37px;height:4px;background:#dedede;"></div>
<svg style="left:508.2px;top:409px;" width="8" height="3.2" viewBox="0 0 8 3.200"><path d="M0 0h8L4 3.200z" fill="#ababab"/></svg>
<div style="left:8px;top:412.5px;width:1008.3px;height:159.3px;background:#f5f5f5;"></div>
<div style="left:16px;top:417.3px;width:42.3px;height:18.3px;background:#3892d4;border-radius:2px;"></div>
<span class="t" style="left:22px;top:418.20px;font-size:11.5px;color:#fff;transform:scaleX(0.8986);">タスク</span>
<span class="t" style="left:72.5px;top:418.20px;font-size:11.5px;color:#222;transform:scaleX(0.8905);">クラスタログ</span>
<div style="left:8px;top:440.5px;width:1008.3px;height:1px;background:#d0d0d0;"></div>
<div style="left:8px;top:441.5px;width:1008.3px;height:23px;background:#fff;"></div>
<div style="left:8px;top:441.5px;width:119.5px;height:23px;background:#eaf2fa;"></div>
<div style="left:8px;top:464.3px;width:1008.3px;height:1px;background:#d0d0d0;"></div>
<div style="left:127.5px;top:441.5px;width:1px;height:23px;background:#d0d0d0;"></div>
<div style="left:247.5px;top:441.5px;width:1px;height:23px;background:#d0d0d0;"></div>
<div style="left:327.4px;top:441.5px;width:1px;height:23px;background:#d0d0d0;"></div>
<div style="left:447.4px;top:441.5px;width:1px;height:23px;background:#d0d0d0;"></div>
<div style="left:841.8px;top:441.5px;width:1px;height:23px;background:#d0d0d0;"></div>
<div style="left:1002.2px;top:441.5px;width:1px;height:23px;background:#d0d0d0;"></div>
<span class="t" style="left:16.25px;top:445.00px;font-size:11.5px;color:#666;transform:scaleX(0.8967);">開始時刻</span>
<svg style="left:61px;top:447.5px;" width="7.5" height="11" viewBox="0 0 7.500 11"><path d="M3.750.5V10M.5 7 3.750 10.200 7 7" fill="none" stroke="#8a8a8a" stroke-width=".9"/></svg>
<span class="t" style="left:136.25px;top:445.00px;font-size:11.5px;color:#666;transform:scaleX(0.8967);">終了時刻</span>
<span class="t" style="left:255.75px;top:445.00px;font-size:11.5px;color:#666;transform:scaleX(0.9232);">ノード</span>
<span class="t" style="left:335.6px;top:445.00px;font-size:11.5px;color:#666;transform:scaleX(0.9261);">ユーザ名</span>
<span class="t" style="left:455.6px;top:445.00px;font-size:11.5px;color:#666;transform:scaleX(0.9304);">説明</span>
<span class="t" style="left:850.5px;top:445.00px;font-size:11.5px;color:#666;transform:scaleX(0.9087);">状態</span>
<div style="left:8px;top:465.3px;width:994.2px;height:20.05px;background:#fff;"></div>
<span class="t" style="left:16.25px;top:468.00px;font-size:11.5px;color:#111;transform:scaleX(0.8920);">7 12 23:57:30</span>
<span class="t" style="left:136.25px;top:468.00px;font-size:11.5px;color:#111;transform:scaleX(0.8920);">7 12 23:57:40</span>
<span class="t" style="left:255.75px;top:468.00px;font-size:11.5px;color:#111;transform:scaleX(0.9096);">proxmox03</span>
<span class="t" style="left:335.6px;top:468.00px;font-size:11.5px;color:#111;transform:scaleX(0.9058);">root@pam</span>
<span class="t" style="left:455.6px;top:468.00px;font-size:11.5px;color:#111;transform:scaleX(0.9105);">クラスタに参加</span>
<span class="t" style="left:850.5px;top:468.00px;font-size:11.5px;color:#111;transform:scaleX(0.9023);">OK</span>
<div style="left:8px;top:485.35px;width:994.2px;height:20.05px;background:#fafafa;"></div>
<span class="t" style="left:16.25px;top:488.05px;font-size:11.5px;color:#111;transform:scaleX(0.8920);">7 12 23:47:55</span>
<span class="t" style="left:136.25px;top:488.05px;font-size:11.5px;color:#111;transform:scaleX(0.8920);">7 12 23:47:56</span>
<span class="t" style="left:255.75px;top:488.05px;font-size:11.5px;color:#111;transform:scaleX(0.9096);">proxmox01</span>
<span class="t" style="left:335.6px;top:488.05px;font-size:11.5px;color:#111;transform:scaleX(0.9058);">root@pam</span>
<span class="t" style="left:455.6px;top:488.05px;font-size:11.5px;color:#111;transform:scaleX(0.9014);">シェル</span>
<span class="t" style="left:850.5px;top:488.05px;font-size:11.5px;color:#111;transform:scaleX(0.9023);">OK</span>
<div style="left:8px;top:505.40000000000003px;width:994.2px;height:20.05px;background:#fff;"></div>
<span class="t" style="left:16.25px;top:508.10px;font-size:11.5px;color:#111;transform:scaleX(0.8920);">7 12 23:44:53</span>
<span class="t" style="left:136.25px;top:508.10px;font-size:11.5px;color:#111;transform:scaleX(0.8920);">7 12 23:45:04</span>
<span class="t" style="left:255.75px;top:508.10px;font-size:11.5px;color:#111;transform:scaleX(0.9096);">proxmox02</span>
<span class="t" style="left:335.6px;top:508.10px;font-size:11.5px;color:#111;transform:scaleX(0.9058);">root@pam</span>
<span class="t" style="left:455.6px;top:508.10px;font-size:11.5px;color:#111;transform:scaleX(0.9105);">クラスタに参加</span>
<span class="t" style="left:850.5px;top:508.10px;font-size:11.5px;color:#111;transform:scaleX(0.9023);">OK</span>
<div style="left:8px;top:525.45px;width:994.2px;height:20.05px;background:#fafafa;"></div>
<span class="t" style="left:16.25px;top:528.15px;font-size:11.5px;color:#111;transform:scaleX(0.8920);">7 12 23:35:09</span>
<span class="t" style="left:136.25px;top:528.15px;font-size:11.5px;color:#111;transform:scaleX(0.9029);">7 12 23:35:11</span>
<span class="t" style="left:255.75px;top:528.15px;font-size:11.5px;color:#111;transform:scaleX(0.9096);">proxmox01</span>
<span class="t" style="left:335.6px;top:528.15px;font-size:11.5px;color:#111;transform:scaleX(0.9058);">root@pam</span>
<span class="t" style="left:455.6px;top:528.15px;font-size:11.5px;color:#111;transform:scaleX(0.9105);">クラスタを作成</span>
<span class="t" style="left:850.5px;top:528.15px;font-size:11.5px;color:#111;transform:scaleX(0.9023);">OK</span>
<div style="left:8px;top:545.5px;width:994.2px;height:20.05px;background:#fff;"></div>
<span class="t" style="left:16.25px;top:548.20px;font-size:11.5px;color:#111;transform:scaleX(0.8920);">7 12 23:25:13</span>
<span class="t" style="left:136.25px;top:548.20px;font-size:11.5px;color:#111;transform:scaleX(0.8920);">7 12 23:25:13</span>
<span class="t" style="left:255.75px;top:548.20px;font-size:11.5px;color:#111;transform:scaleX(0.9096);">proxmox01</span>
<span class="t" style="left:335.6px;top:548.20px;font-size:11.5px;color:#111;transform:scaleX(0.9058);">root@pam</span>
<span class="t" style="left:455.6px;top:548.20px;font-size:11.5px;color:#111;transform:scaleX(0.9013);">VMとコンテナの一括起動</span>
<span class="t" style="left:850.5px;top:548.20px;font-size:11.5px;color:#111;transform:scaleX(0.9023);">OK</span>
<div style="left:8px;top:565.55px;width:994.2px;height:6.25px;background:#fafafa;"></div>
<div style="left:8px;top:565.55px;width:994px;height:6.25px;overflow:hidden"><div style="position:absolute;left:-8px;top:-565.55px;width:1024px;height:578px" id="lastrow">
<span class="t" style="left:16.25px;top:569.55px;font-size:11.5px;color:#111;transform:scaleX(0.8920);">7 12 23:25:12</span>
<span class="t" style="left:136.25px;top:569.55px;font-size:11.5px;color:#111;transform:scaleX(0.8920);">7 12 23:25:12</span>
<span class="t" style="left:255.75px;top:569.55px;font-size:11.5px;color:#111;transform:scaleX(0.9096);">proxmox01</span>
<span class="t" style="left:335.6px;top:569.55px;font-size:11.5px;color:#111;transform:scaleX(0.9058);">root@pam</span>
<span class="t" style="left:455.6px;top:569.55px;font-size:11.5px;color:#111;transform:scaleX(0.9013);">VMとコンテナの一括起動</span>
</div></div>
<div style="left:8px;top:485px;width:994.2px;height:1px;background:#e2e2e2;"></div>
<div style="left:8px;top:505px;width:994.2px;height:1px;background:#e2e2e2;"></div>
<div style="left:8px;top:525px;width:994.2px;height:1px;background:#e2e2e2;"></div>
<div style="left:8px;top:545px;width:994.2px;height:1px;background:#e2e2e2;"></div>
<div style="left:8px;top:565px;width:994.2px;height:1px;background:#e2e2e2;"></div>
<div style="left:1002.2px;top:465.3px;width:14.1px;height:106.5px;background:#f0f0f0;"></div>
<div style="left:1004.4px;top:479px;width:10.2px;height:12.5px;background:#c1c1c1;"></div>
<svg style="left:1006.3px;top:470.5px;" width="6" height="3.5" viewBox="0 0 6 3.500"><path d="M0 3.500 3 0l3 3.500z" fill="#a3a3a3"/></svg>
<svg style="left:1006.3px;top:562.5px;" width="6" height="3.5" viewBox="0 0 6 3.500"><path d="M0 0 3 3.500 6 0z" fill="#505050"/></svg>
</body>
</html>
